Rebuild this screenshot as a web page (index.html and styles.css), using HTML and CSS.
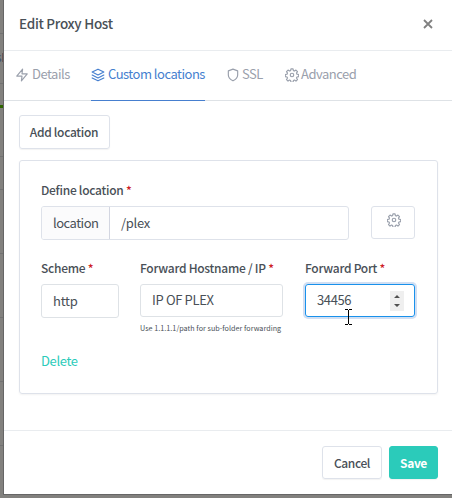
FILE: index.html
```html
<!DOCTYPE html>
<html lang="en">
<head>
<meta charset="utf-8">
<title>Edit Proxy Host</title>
<link rel="stylesheet" href="styles.css">
</head>
<body>
<div class="backdrop">
  <span class="line line-a"></span><span class="line line-b"></span><span class="line line-c"></span><span class="line line-d"></span><span class="line line-e"></span><span class="line line-f"></span><span class="line line-g"></span><span class="line line-h"></span>
  <span class="peek">s</span><span class="peek-edge"></span><span class="green"></span>
</div>
<div class="modal">
  <header class="header">
    <h1 class="title">Edit Proxy Host</h1>
    <button class="close" aria-label="Close"><svg width="10" height="10" viewBox="0 0 10 10"><path d="M1 1l8 8M9 1L1 9" fill="none" stroke="#808080" stroke-width="1.8"/></svg></button>
  </header>
  <nav class="tabs">
    <a class="tab details"><svg class="icon" viewBox="0 0 24 24"><path d="M13 2L3 14h9l-1 8 10-12h-9z"/></svg><span>Details</span></a>
    <a class="tab custom active"><svg class="icon" viewBox="0 0 24 24"><path d="M12 2L2 7l10 5 10-5zM2 12l10 5 10-5M2 17l10 5 10-5"/></svg><span>Custom locations</span></a>
    <a class="tab ssl"><svg class="icon" viewBox="0 0 24 24"><path d="M12 22s8-4 8-10V5l-8-3-8 3v7c0 6 8 10 8 10z"/></svg><span>SSL</span></a>
    <a class="tab advanced"><svg class="icon" viewBox="0 0 24 24"><use href="#gear"/></svg><span>Advanced</span></a>
  </nav>
  <main class="body">
    <button class="btn add"><span>Add location</span></button>
    <section class="card">
      <div class="label define">Define location <b>*</b></div>
      <div class="row">
        <div class="group"><span class="addon">location</span><span class="value">/plex</span></div>
        <button class="gear-btn" aria-label="Settings"><svg class="icon" viewBox="0 0 24 24"><path id="gear" d="M10.200 1.500h3.600l.6 3 1.800.8 2.600-1.700 2.600 2.600-1.700 2.600.8 1.800 3 .6v3.600l-3 .6-.8 1.800 1.700 2.600-2.600 2.600-2.600-1.700-1.800.8-.6 3h-3.600l-.6-3-1.800-.8-2.600 1.700-2.600-2.600 1.700-2.600-.8-1.800-3-.6v-3.600l3-.6.8-1.800-1.700-2.600 2.600-2.600 2.600 1.700 1.800-.8zM15 12a3 3 0 1 1-6 0 3 3 0 0 1 6 0z"/></svg></button>
      </div>
      <div class="fields">
        <div class="field"><div class="label scheme-label">Scheme <b>*</b></div><div class="input scheme">http</div></div>
        <div class="field"><div class="label host-label">Forward Hostname / IP <b>*</b></div><div class="input host">IP OF PLEX</div><div class="help"><span>Use 1.1.1.1/path for sub-folder forwarding</span></div></div>
        <div class="field"><div class="label port-label">Forward Port <b>*</b></div><div class="input port"><span>34456</span><svg class="spin" width="14" height="20" viewBox="0 0 14 20"><path d="M0 0h14v20H0z" fill="#efefef"/><path d="M4 7l3-3 3 3zM4 13h6l-3 3z" fill="#505050"/></svg></div></div>
      </div>
      <a class="delete">Delete</a>
    </section>
  </main>
  <footer class="footer">
    <button class="btn cancel"><span>Cancel</span></button>
    <button class="btn save"><span>Save</span></button>
  </footer>
</div>
<svg class="cursor" width="7" height="16" viewBox="0 0 7 16"><path d="M0 .5h3M4 .5h3M3.500 1v14M0 15.500h3M4 15.500h3" fill="none" stroke="#000"/></svg>
</body>
</html>
```
FILE: styles.css
```css
* { box-sizing: border-box; }
body { margin: 0; width: 452px; height: 498px; overflow: hidden; position: relative; background: #7b7b7b; color: #495057; font: 13px/20px "Noto Sans CJK SC", sans-serif; letter-spacing: -.5px; }
button { margin: 0; padding: 0; font: inherit; letter-spacing: inherit; color: inherit; background: none; border: 0; }
.backdrop { position: absolute; inset: 0; background: #82817e; }
.line { position: absolute; left: 0; width: 4px; height: 1px; background: #727272; }
.line-a { top: 33px; } .line-b { top: 83px; } .line-c { top: 156px; } .line-d { top: 189px; }
.line-e { top: 253px; } .line-f { top: 317px; } .line-g { top: 381px; } .line-h { top: 445px; }
.green { position: absolute; left: 0; top: 105px; width: 4px; height: 3px; background: #2f6500; }
.peek { position: absolute; left: -4px; top: 47px; font-size: 12px; color: #3d4c66; }
.peek-edge { position: absolute; left: 2px; top: 53px; width: 2px; height: 9px; background: #6d5657; }
.modal { position: relative; margin-left: 4px; width: 448px; height: 494px; background: #fff; box-shadow: 0 0 0 1px #666; display: flex; flex-direction: column; }
.header { height: 51px; border-bottom: 1px solid #e9ecef; display: flex; justify-content: space-between; align-items: center; padding: 0 19px 3px 15px; }
.title { margin: -2px 0 0; font-size: 13.5px; font-weight: 500; white-space: nowrap; letter-spacing: -.28px; }
.close { width: 10px; height: 10px; line-height: 0; }
.tabs { height: 50px; border-bottom: 1px solid #dee2e6; display: flex; padding-left: 11px; }
.tab { height: 50px; display: flex; align-items: center; color: #9aa0ac; white-space: nowrap; padding-bottom: 3px; }
.tab span { margin-top: -1px; }
.tab .icon { margin-right: 3px; }
.details { width: 76px; }
.custom { width: 114px; margin-right: 22px; }
.ssl { width: 58px; }
.ssl .icon { margin: 0 2px 0 -1px; }
.advanced .icon { margin-right: 2px; }
.active { color: #467fcf; border-bottom: 1px solid #467fcf; padding-bottom: 2px; }
.icon { width: 14px; height: 14px; flex: none; fill: none; stroke: currentColor; stroke-width: 2; stroke-linejoin: round; stroke-linecap: round; }
.body { height: 329px; padding: 14px 14px 0 15px; }
.btn { display: flex; align-items: center; justify-content: center; height: 34px; border: 1px solid #dee2ea; border-radius: 3px; font-size: 12px; font-weight: 500; letter-spacing: -.4px; white-space: nowrap; box-shadow: 0 1px 1px rgba(0,0,0,.05); }
.add { width: 91px; }
.add span { letter-spacing: -.3px; margin-right: 1px; }
.card { margin-top: 11px; height: 234px; border: 1px solid #dee2ea; border-radius: 3px; padding: 20px 22px 0 21px; box-shadow: 0 1px 2px rgba(0,0,0,.05); }
.label { height: 20px; line-height: 18px; font-size: 12px; font-weight: 500; letter-spacing: -.27px; white-space: nowrap; }
.label b { color: #cd201f; font-weight: 500; }
.row { margin-top: 5px; display: flex; justify-content: space-between; }
.group { display: flex; width: 308px; height: 34px; border: 1px solid #dee2ea; border-radius: 3px; line-height: 31px; }
.addon { width: 68px; background: #fbfbfc; border-right: 1px solid #d3d6e1; padding-left: 11px; border-radius: 2px 0 0 2px; }
.value { padding-left: 11px; letter-spacing: -.3px; }
.gear-btn { width: 44px; height: 33px; border: 1px solid #dee2ea; border-radius: 3px; display: flex; justify-content: center; align-items: center; color: #9aa0ac; padding: 0 0 5px 1px; }
.fields { margin-top: 19px; display: grid; grid-template-columns: 78px 143px 110px; column-gap: 21.500px; }
.host-label, .host, .help { margin-left: -.5px; }
.input { margin-top: 5px; height: 33px; line-height: 30px; border: 1px solid #dee2e6; border-radius: 3px; padding-left: 11px; }
.host { letter-spacing: -.35px; margin-right: .5px; }
.scheme { height: 34px; line-height: 31px; letter-spacing: -.2px; }
.port { border-color: #1991eb; box-shadow: 0 0 0 2px #d1dff3; display: flex; align-items: center; justify-content: space-between; padding-right: 10px; }
.port span { letter-spacing: -.4px; margin-top: -2px; }
.help { height: 14px; margin-top: 4px; line-height: 14px; font-size: 7.2px; letter-spacing: .03px; white-space: nowrap; }
.delete { display: block; margin-top: 16px; color: #2bcbba; letter-spacing: -.35px; }
.footer { border-top: 1px solid #e9ecef; padding: 15px 14px 0; display: flex; justify-content: flex-end; gap: 7px; }
.footer .btn { height: 33px; }
.cancel { width: 60px; }
.save { width: 49px; color: #fff; background: #2bcbba; border-color: #2bcbba; font-weight: 700; }
.cursor { position: absolute; left: 345px; top: 309px; }
```
